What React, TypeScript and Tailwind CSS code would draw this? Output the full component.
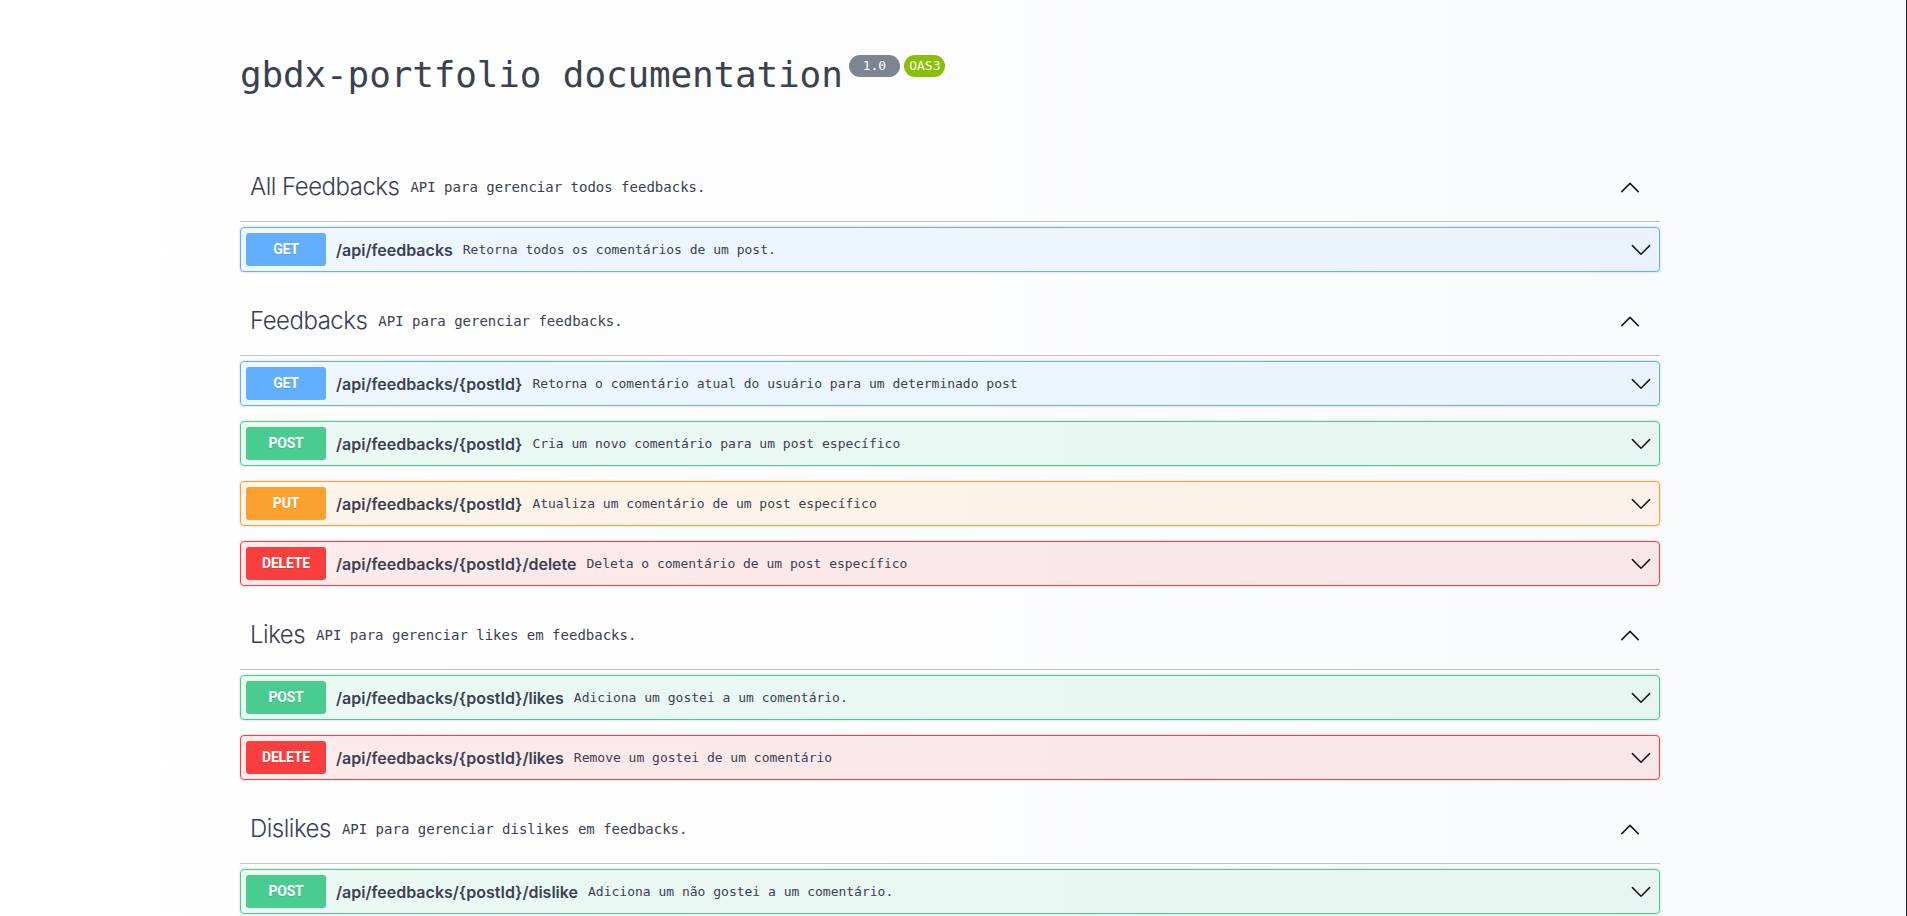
import React from "react";

type Method = "GET" | "POST" | "PUT" | "DELETE";

const methodStyles: Record<Method, { row: string; badge: string }> = {
  GET: {
    row: "border-[#61affe] bg-[rgba(97,175,254,0.1)]",
    badge: "bg-[#61affe]",
  },
  POST: {
    row: "border-[#49cc90] bg-[rgba(73,204,144,0.1)]",
    badge: "bg-[#49cc90]",
  },
  PUT: {
    row: "border-[#fca130] bg-[rgba(252,161,48,0.1)]",
    badge: "bg-[#fca130]",
  },
  DELETE: {
    row: "border-[#f93e3e] bg-[rgba(249,62,62,0.1)]",
    badge: "bg-[#f93e3e]",
  },
};

type Op = { method: Method; path: string; desc: string };
type Tag = { name: string; desc: string; ops: Op[] };

const tags: Tag[] = [
  {
    name: "All Feedbacks",
    desc: "API para gerenciar todos feedbacks.",
    ops: [
      { method: "GET", path: "/api/feedbacks", desc: "Retorna todos os comentários de um post." },
    ],
  },
  {
    name: "Feedbacks",
    desc: "API para gerenciar feedbacks.",
    ops: [
      {
        method: "GET",
        path: "/api/feedbacks/{postId}",
        desc: "Retorna o comentário atual do usuário para um determinado post",
      },
      { method: "POST", path: "/api/feedbacks/{postId}", desc: "Cria um novo comentário para um post específico" },
      { method: "PUT", path: "/api/feedbacks/{postId}", desc: "Atualiza um comentário de um post específico" },
      { method: "DELETE", path: "/api/feedbacks/{postId}/delete", desc: "Deleta o comentário de um post específico" },
    ],
  },
  {
    name: "Likes",
    desc: "API para gerenciar likes em feedbacks.",
    ops: [
      { method: "POST", path: "/api/feedbacks/{postId}/likes", desc: "Adiciona um gostei a um comentário." },
      { method: "DELETE", path: "/api/feedbacks/{postId}/likes", desc: "Remove um gostei de um comentário" },
    ],
  },
  {
    name: "Dislikes",
    desc: "API para gerenciar dislikes em feedbacks.",
    ops: [
      { method: "POST", path: "/api/feedbacks/{postId}/dislike", desc: "Adiciona um não gostei a um comentário." },
      { method: "DELETE", path: "/api/feedbacks/{postId}/dislike", desc: "Remove um não gostei de um comentário." },
    ],
  },
];

const mono = "font-['DejaVu_Sans_Mono',monospace]";
const sans = "font-['Inter','Noto_Sans',sans-serif]";

function ChevronUp() {
  return (
    <svg width="20" height="20" viewBox="0 0 20 20" fill="none" className="block">
      <polyline points="1.8,14.6 10,6.4 18.2,14.6" stroke="#1b1b1b" strokeWidth="1.6" strokeLinecap="round" strokeLinejoin="round" />
    </svg>
  );
}

function ChevronDown() {
  return (
    <svg width="20" height="20" viewBox="0 0 20 20" fill="none" className="block">
      <polyline points="1.4,5.6 10,14.2 18.6,5.6" stroke="#1b1b1b" strokeWidth="1.6" strokeLinecap="round" strokeLinejoin="round" />
    </svg>
  );
}

function OpRow({ op }: { op: Op }) {
  const s = methodStyles[op.method];
  return (
    <div
      className={`mb-[15px] flex h-[45px] items-center rounded-[4px] border px-[5px] shadow-[0_0_3px_rgba(0,0,0,0.19)] ${s.row}`}
    >
      <div
        className={`flex h-[33px] w-20 shrink-0 items-center justify-center rounded-[3px] text-[14px] font-bold tracking-[-0.2px] text-white [text-shadow:0_1px_0_rgba(0,0,0,0.1)] font-['Roboto','Inter',sans-serif] ${s.badge}`}
      >
        {op.method}
      </div>
      <span className={`ml-[10px] text-[16px] font-semibold text-[#3b4151] ${sans}`}>{op.path}</span>
      <span className={`ml-[10px] flex-1 text-[13px] text-[#3b4151] ${mono}`}>{op.desc}</span>
      <div className="mr-[3px] flex h-5 w-5 items-center justify-center">
        <ChevronDown />
      </div>
    </div>
  );
}

function TagSection({ tag }: { tag: Tag }) {
  return (
    <div>
      <div className="mb-[5px] flex h-[69px] items-center border-b border-[rgba(59,65,81,0.3)] pl-[10px] pr-[20px]">
        <span className={`text-[24px] font-light tracking-[-0.5px] text-[#3b4151] ${sans}`}>{tag.name}</span>
        <span className={`ml-[11px] flex-1 text-[14px] text-[#3b4151] ${mono}`}>{tag.desc}</span>
        <ChevronUp />
      </div>
      {tag.ops.map((op, i) => (
        <OpRow key={i} op={op} />
      ))}
    </div>
  );
}

export default function App() {
  return (
    <div className="flex h-[916px] w-full overflow-hidden bg-linear-to-r from-white to-[#f9fafc]">
      <div className="flex-1">
        <div className="ml-[240px] w-[1420px]">
          <div className="flex items-start pt-[53px]">
            <h1 className={`text-[36px] leading-[43px] font-normal tracking-[-0.15px] text-[#3b4151] ${mono}`}>
              gbdx-portfolio documentation
            </h1>
            <span
              className={`ml-[6px] mt-[2px] flex h-[22px] items-center rounded-full bg-[#7d8492] px-[14px] text-[13px] text-white ${mono}`}
            >
              1.0
            </span>
            <span
              className={`ml-[4px] mt-[2px] flex h-[22px] items-center rounded-full bg-[#89bf04] px-[5px] text-[13px] text-white ${mono}`}
            >
              OAS3
            </span>
          </div>
          <div className="mt-[57px]">
            {tags.map((t, i) => (
              <TagSection key={i} tag={t} />
            ))}
          </div>
        </div>
      </div>
      <div className="w-px shrink-0 bg-[#202124]" />
    </div>
  );
}
